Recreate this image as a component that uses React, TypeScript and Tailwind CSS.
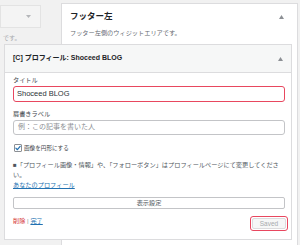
const FONT = "font-['Liberation_Sans','Noto_Sans_CJK_JP',sans-serif]"

function UpArrow() {
  return (
    <svg width="5" height="4" viewBox="0 0 5 4" aria-hidden="true">
      <polygon points="2.5,0 5,4 0,4" fill="#8c8f94" />
    </svg>
  )
}

function DownArrow() {
  return (
    <svg width="5" height="3" viewBox="0 0 5 3" aria-hidden="true">
      <polygon points="0,0 5,0 2.5,3" fill="#b4b6b9" />
    </svg>
  )
}

function CheckBox() {
  return (
    <span className="w-[8px] h-[8px] border border-[#8c8f94] rounded-[1px] bg-white flex items-center justify-center">
      <svg width="7" height="6" viewBox="0 0 7 6" aria-hidden="true">
        <path d="M1 3.2l1.8 1.8L6 1" stroke="#2271b1" strokeWidth="1.4" fill="none" strokeLinecap="round" strokeLinejoin="round" />
      </svg>
    </span>
  )
}

export default function App() {
  return (
    <div className={`w-[300px] h-[245px] bg-[#f1f1f1] flex overflow-hidden ${FONT}`}>
      {/* left column (other sidebar, partly hidden) */}
      <div className="w-[61px] shrink-0 flex flex-col">
        <div className="mt-[5px] w-[41px] h-[23px] border border-[#e3e3e3] bg-[#f4f4f4] flex items-center justify-end pr-[9px]">
          <DownArrow />
        </div>
        <div className="mt-[6px] pl-[3px] text-[6px] leading-[8px] text-[#a7aaad]">です。</div>
      </div>

      {/* footer-left sidebar panel */}
      <div className="mt-[3px] w-[237px] h-[300px] shrink-0 border border-[#dcdcde] bg-white flex flex-col">
        <div className="flex justify-between items-start pl-[8px] pr-[13px] pt-[6px]">
          <div className="text-[8.5px] leading-[12px] font-bold text-[#1d2327]">フッター左</div>
          <div className="pt-[5px]">
            <UpArrow />
          </div>
        </div>
        <div className="mt-[7px] pl-[8px] text-[6.2px] leading-[8px] text-[#646970]">フッター左側のウィジットエリアです。</div>

        {/* expanded widget */}
        <div className="mt-[7px] ml-[-58px] mr-[5px] border border-[#dcdcde] bg-white flex flex-col">
          <div className="h-[28px] bg-[#f6f7f7] border-b border-[#dcdcde] flex items-center justify-between pl-[8px] pr-[8px]">
            <span className="text-[7px] font-bold text-[#1d2327]">[C] プロフィール: Shoceed BLOG</span>
            <UpArrow />
          </div>

          <div className="pl-[8px] pr-[6px] pt-[3px] pb-[8px] flex flex-col">
            <label className="text-[6.2px] leading-[8px] text-[#3c434a]">タイトル</label>
            <div className="mt-[2px] h-[16px] border-[1.5px] border-[#e8475f] rounded-[3px] flex items-center pl-[3px] text-[7.5px] text-[#2c3338]">
              Shoceed BLOG
            </div>

            <label className="mt-[8px] text-[6.2px] leading-[8px] text-[#3c434a]">肩書きラベル</label>
            <div className="mt-[2px] h-[15px] border border-[#c3c4c7] rounded-[3px] flex items-center pl-[4px] text-[7px] text-[#8c8f94]">
              例：この記事を書いた人
            </div>

            <div className="mt-[9px] h-[8px] flex items-center gap-[2px] pl-[1px]">
              <CheckBox />
              <span className="text-[5.6px] leading-[8px] text-[#3c434a]">画像を円形にする</span>
            </div>

            <p className="mt-[8px] text-[6.2px] leading-[10px] text-[#50575e]">
              ■「プロフィール画像・情報」や、「フォローボタン」はプロフィールページにて変更してください。
            </p>
            <a className="text-[6.2px] leading-[10px] text-[#2271b1] underline">あなたのプロフィール</a>

            <div className="mt-[7px] h-[12px] border border-[#c3c4c7] rounded-[2px] bg-white flex items-center justify-center text-[6.2px] text-[#50575e]">
              表示設定
            </div>

            <div className="mt-[7px] flex justify-between items-start">
              <div className="text-[6.2px] leading-[10px]">
                <span className="text-[#d63638]">削除</span>
                <span className="text-[#8c8f94]"> | </span>
                <span className="text-[#2271b1] underline">完了</span>
              </div>
              <div className="mr-[-3px] w-[38px] h-[15px] border-[1.5px] border-[#e8475f] rounded-[3px] p-[1px] flex">
                <div className="flex-1 bg-[#f6f7f7] border border-[#dcdcde] rounded-[2px] flex items-center justify-center text-[6.5px] text-[#a7aaad]">
                  Saved
                </div>
              </div>
            </div>
          </div>
        </div>
      </div>
    </div>
  )
}
